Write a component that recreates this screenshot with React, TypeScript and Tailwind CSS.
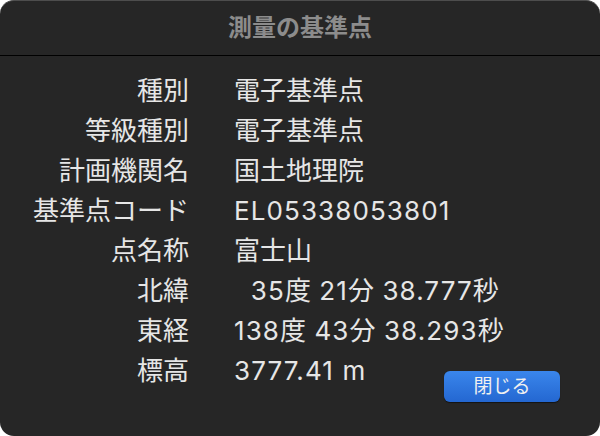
const rows: [string, string][] = [
  ['種別', '電子基準点'],
  ['等級種別', '電子基準点'],
  ['計画機関名', '国土地理院'],
  ['基準点コード', 'EL05338053801'],
  ['点名称', '富士山'],
  ['北緯', '\u00a0\u00a035度 21分 38.777秒'],
  ['東経', '138度 43分 38.293秒'],
];

// latin runs are a bit wider in the original font, so space them out
const Value = ({ text }: { text: string }) => (
  <>
    {text.split(/([\x00-\x7f\u00a0]+)/).map((part, i) =>
      /^[\x00-\x7f\u00a0]+$/.test(part) ? (
        <span key={i} className="tracking-[1.1px]">{part}</span>
      ) : (
        <span key={i}>{part}</span>
      )
    )}
  </>
);

const App = () => {
  return (
    <div className="w-[600px] h-[436px] bg-white" style={{ fontFamily: 'Inter, "Noto Sans CJK JP", sans-serif' }}>
      <div className="w-full h-full rounded-[14px] bg-[#262626] border-t border-[#4d4d4d] overflow-hidden flex flex-col">
        {/* Title bar */}
        <div className="h-[55px] flex items-center justify-center border-b border-black">
          <h1 className="text-[24px] font-bold text-[#8c8c8c] leading-none">測量の基準点</h1>
        </div>

        {/* Details */}
        <div className="pt-[15px] pr-[40px] grid grid-cols-[189px_1fr] gap-x-[45px] text-[26px] text-[#e6e6e6] leading-none">
          {rows.map(([label, value]) => (
            <div key={label} className="contents">
              <div className="h-10 flex items-center justify-end">{label}</div>
              <div className="h-10 flex items-center whitespace-pre">
                <Value text={value} />
              </div>
            </div>
          ))}
          <div className="h-10 flex items-center justify-end">標高</div>
          <div className="h-10 flex items-center justify-between">
            <span className="whitespace-pre">
              <Value text="3777.41 m" />
            </span>
            <button className="mt-[30px] w-[116px] h-[31px] rounded-[6px] bg-gradient-to-b from-[#3a86ec] to-[#2467d1] shadow-[0_1px_1px_rgba(0,0,0,0.5)] text-[19px] text-[#f0f0f0] leading-none flex items-center justify-center">
              閉じる
            </button>
          </div>
        </div>
      </div>
    </div>
  );
};

export default App;
